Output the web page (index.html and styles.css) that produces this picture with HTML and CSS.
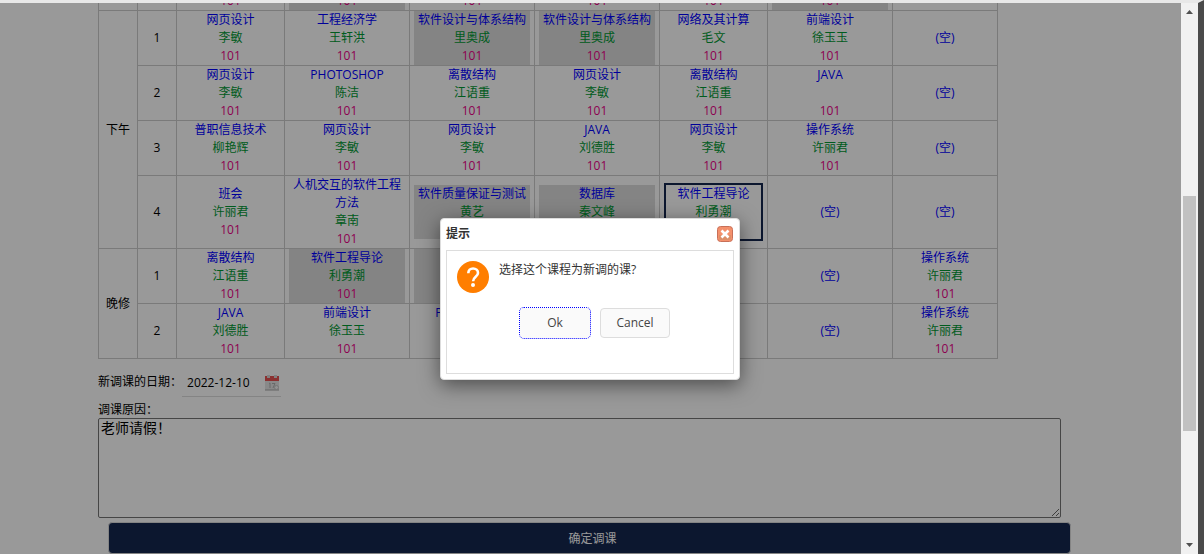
FILE: index.html
```html
<!DOCTYPE html>
<html lang="zh-CN">
<head>
    <meta charset="UTF-8">
    <meta name="viewport" content="width=device-width, initial-scale=1.0">
    <title>调课</title>
    <link rel="stylesheet" href="styles.css">
</head>
<body>
    <div class="window">
        <div class="page">
            <form class="content">
                <table class="timetable">
                    <colgroup>
                        <col class="col-side"><col class="col-side">
                        <col class="col-mid"><col class="col-wide"><col class="col-wide"><col class="col-wide"><col class="col-mid"><col class="col-wide"><col class="col-last">
                    </colgroup>
                    <tbody>
                        <tr>
                            <th></th>
                            <th></th>
                            <td><div class="course"><span class="room">101</span></div></td>
                            <td><div class="course busy"><span class="room">101</span></div></td>
                            <td><div class="course"><span class="room">101</span></div></td>
                            <td><div class="course"><span class="room">101</span></div></td>
                            <td><div class="course"><span class="room">101</span></div></td>
                            <td><div class="course busy"><span class="room">101</span></div></td>
                            <td></td>
                        </tr>
                        <!-- 下午 -->
                        <tr>
                            <th rowspan="4">下午</th>
                            <th>1</th>
                            <td><div class="course"><span class="name">网页设计</span><span class="teacher">李敏</span><span class="room">101</span></div></td>
                            <td><div class="course"><span class="name">工程经济学</span><span class="teacher">王轩洪</span><span class="room">101</span></div></td>
                            <td><div class="course busy"><span class="name">软件设计与体系结构</span><span class="teacher">里奥成</span><span class="room">101</span></div></td>
                            <td><div class="course busy"><span class="name">软件设计与体系结构</span><span class="teacher">里奥成</span><span class="room">101</span></div></td>
                            <td><div class="course"><span class="name">网络及其计算</span><span class="teacher">毛文</span><span class="room">101</span></div></td>
                            <td><div class="course"><span class="name">前端设计</span><span class="teacher">徐玉玉</span><span class="room">101</span></div></td>
                            <td><span class="name">(空)</span></td>
                        </tr>
                        <tr>
                            <th>2</th>
                            <td><div class="course"><span class="name">网页设计</span><span class="teacher">李敏</span><span class="room">101</span></div></td>
                            <td><div class="course"><span class="name">PHOTOSHOP</span><span class="teacher">陈洁</span><span class="room">101</span></div></td>
                            <td><div class="course"><span class="name">离散结构</span><span class="teacher">江语重</span><span class="room">101</span></div></td>
                            <td><div class="course"><span class="name">网页设计</span><span class="teacher">李敏</span><span class="room">101</span></div></td>
                            <td><div class="course"><span class="name">离散结构</span><span class="teacher">江语重</span><span class="room">101</span></div></td>
                            <td><div class="course"><span class="name">JAVA</span><span class="teacher"></span><span class="room">101</span></div></td>
                            <td><span class="name">(空)</span></td>
                        </tr>
                        <tr>
                            <th>3</th>
                            <td><div class="course"><span class="name">普职信息技术</span><span class="teacher">柳艳辉</span><span class="room">101</span></div></td>
                            <td><div class="course"><span class="name">网页设计</span><span class="teacher">李敏</span><span class="room">101</span></div></td>
                            <td><div class="course"><span class="name">网页设计</span><span class="teacher">李敏</span><span class="room">101</span></div></td>
                            <td><div class="course"><span class="name">JAVA</span><span class="teacher">刘德胜</span><span class="room">101</span></div></td>
                            <td><div class="course"><span class="name">网页设计</span><span class="teacher">李敏</span><span class="room">101</span></div></td>
                            <td><div class="course"><span class="name">操作系统</span><span class="teacher">许丽君</span><span class="room">101</span></div></td>
                            <td><span class="name">(空)</span></td>
                        </tr>
                        <tr>
                            <th>4</th>
                            <td><div class="course"><span class="name">班会</span><span class="teacher">许丽君</span><span class="room">101</span></div></td>
                            <td><div class="course"><span class="name">人机交互的软件工程方法</span><span class="teacher">章南</span><span class="room">101</span></div></td>
                            <td><div class="course busy"><span class="name">软件质量保证与测试</span><span class="teacher">黄艺</span><span class="room"></span></div></td>
                            <td><div class="course busy"><span class="name">数据库</span><span class="teacher">秦文峰</span><span class="room"></span></div></td>
                            <td><div class="course selected"><span class="name">软件工程导论</span><span class="teacher">利勇潮</span><span class="room"></span></div></td>
                            <td><span class="name">(空)</span></td>
                            <td><span class="name">(空)</span></td>
                        </tr>
                        <!-- 晚修 -->
                        <tr>
                            <th rowspan="2">晚修</th>
                            <th>1</th>
                            <td><div class="course"><span class="name">离散结构</span><span class="teacher">江语重</span><span class="room">101</span></div></td>
                            <td><div class="course busy"><span class="name">软件工程导论</span><span class="teacher">利勇潮</span><span class="room">101</span></div></td>
                            <td><div class="course busy"><span class="name"></span><span class="teacher"></span><span class="room"></span></div></td>
                            <td></td>
                            <td></td>
                            <td><span class="name">(空)</span></td>
                            <td><div class="course"><span class="name">操作系统</span><span class="teacher">许丽君</span><span class="room">101</span></div></td>
                        </tr>
                        <tr>
                            <th>2</th>
                            <td><div class="course"><span class="name">JAVA</span><span class="teacher">刘德胜</span><span class="room">101</span></div></td>
                            <td><div class="course"><span class="name">前端设计</span><span class="teacher">徐玉玉</span><span class="room">101</span></div></td>
                            <td><div class="course"><span class="name">PHOTOSHOP</span><span class="teacher"></span><span class="room"></span></div></td>
                            <td></td>
                            <td></td>
                            <td><span class="name">(空)</span></td>
                            <td><div class="course"><span class="name">操作系统</span><span class="teacher">许丽君</span><span class="room">101</span></div></td>
                        </tr>
                    </tbody>
                </table>

                <div class="date-row">
                    <label for="newDate">新调课的日期：</label>
                    <span class="date-box">
                        <input type="text" id="newDate" class="date-input" value="2022-12-10">
                        <svg class="date-icon" width="16" height="18" viewBox="0 0 16 18">
                            <rect x="1" y="3" width="14" height="13" fill="#e4e4e4"/>
                            <path d="M1 2h14v5H1z" fill="#e85050"/>
                            <path d="M3 1h3v3H3zM10 1h3v3h-3z" fill="#d8d8d8"/>
                            <path d="M1 16h14" stroke="#a8a8a8"/>
                            <path d="M5 9.500l1-.5v5M8 9.500h3l-2 4.500" fill="none" stroke="#b0b0b0"/>
                            <circle cx="12.500" cy="13.500" r="2" fill="#f4f4f4" stroke="#c4c4c4"/>
                        </svg>
                    </span>
                </div>

                <label class="reason-label" for="reason">调课原因：</label>
                <textarea id="reason" class="reason">老师请假！</textarea>
                <button type="button" class="submit">确定调课</button>
            </form>

            <div class="mask">
                <div class="dialog" role="dialog" aria-labelledby="dialogTitle">
                    <div class="dialog-header">
                        <h2 id="dialogTitle" class="dialog-title">提示</h2>
                        <button type="button" class="dialog-close" aria-label="关闭">
                            <svg width="16" height="16" viewBox="0 0 16 16">
                                <rect x=".5" y=".5" width="15" height="15" rx="3" fill="#f4906c" stroke="#c87058"/>
                                <path d="M2 9h12v3a2 2 0 0 1-2 2H4a2 2 0 0 1-2-2z" fill="#dc8f68"/>
                                <path d="M4.500 4.500l7 7M11.500 4.500l-7 7" stroke="#fff" stroke-width="2.600"/>
                            </svg>
                        </button>
                    </div>
                    <div class="dialog-body">
                        <div class="message">
                            <svg width="32" height="32" viewBox="0 0 32 32">
                                <circle cx="16" cy="16" r="16" fill="#ff7e00"/>
                                <path d="M11.300 12.200C11.300 9.400 13.300 7.500 16.100 7.500s4.900 1.700 4.900 4.400c0 3.700-4.900 4-4.900 8.300" fill="none" stroke="#fff" stroke-width="2.600"/>
                                <circle cx="16" cy="24" r="2" fill="#fff"/>
                            </svg>
                            <p>选择这个课程为新调的课?</p>
                        </div>
                        <div class="dialog-buttons">
                            <button type="button" class="dialog-btn focused">Ok</button>
                            <button type="button" class="dialog-btn">Cancel</button>
                        </div>
                    </div>
                </div>
            </div>
        </div>

        <div class="scrollbar">
            <svg class="scroll-arrow" width="17" height="17" viewBox="0 0 17 17"><path d="M5 11l3.500-4 3.500 4z" fill="#505050"/></svg>
            <div class="track-before"></div>
            <div class="thumb"></div>
            <div class="track-after"></div>
            <svg class="scroll-arrow" width="17" height="17" viewBox="0 0 17 17"><path d="M5 6l3.500 4L12 6z" fill="#505050"/></svg>
        </div>
    </div>
</body>
</html>
```
FILE: styles.css
```css
:root {
    --navy: #14274f;
    --line: #ccc;
}

* {
    margin: 0;
    padding: 0;
    box-sizing: border-box;
}

body {
    font-family: "Open Sans", "Noto Sans CJK SC", sans-serif;
    font-size: 12px;
    line-height: 18px;
    color: #000;
}

button,
input {
    font: inherit;
}

.window {
    display: flex;
    height: 100vh;
    border-top: 3px solid #e8e8e8;
    border-right: 6px solid #4a4a4a;
    overflow: hidden;
}

.page {
    position: relative;
    flex: 1;
    overflow: hidden;
    background: #fff;
}

.content {
    padding: 0 110px 0 98px;
}

/* timetable, scrolled part of the way down */
.timetable {
    width: 900px;
    margin-top: -12px;
    table-layout: fixed;
    border-collapse: collapse;
    text-align: center;
}

.col-side {
    width: 39px;
}

.col-mid {
    width: 108px;
}

.col-wide {
    width: 125px;
}

.col-last {
    width: 105px;
}

.timetable th,
.timetable td {
    padding: 0 4px;
    border: 1px solid var(--line);
    font-weight: normal;
    vertical-align: middle;
}

.course span {
    display: block;
    min-height: 18px;
}

.busy {
    background: #dcdcdc;
}

.selected {
    border: 2px solid var(--navy);
}

.name {
    color: #00f;
}

.teacher {
    color: #093;
}

.room {
    color: #ec0088;
}

/* form under the table */
.date-row {
    display: flex;
    margin-top: 11px;
    line-height: 24px;
}

.date-box {
    display: flex;
    align-items: center;
    width: 99px;
    height: 27px;
    border-bottom: 1px solid #ddd;
}

.date-input {
    flex: 1;
    min-width: 0;
    padding-left: 5px;
    border: none;
    background: none;
    outline: none;
}

.date-icon {
    margin-right: 1px;
}

.reason-label {
    display: block;
    margin-top: 5px;
    line-height: 16px;
}

.reason {
    display: block;
    width: calc(100% - 10px);
    height: 100px;
    padding: 2px;
    border: 1px solid #767676;
    border-radius: 2px;
    font-family: "Liberation Mono", "Noto Sans CJK SC", monospace;
    font-size: 14px;
    line-height: 16px;
}

.submit {
    display: block;
    width: calc(100% - 10px);
    height: 32px;
    margin: 4px 0 0 10px;
    padding: 2px 0 0 6px;
    border: 1px solid #ddd;
    border-radius: 4px;
    background: var(--navy);
    color: #fff;
}

/* message box */
.mask {
    position: absolute;
    inset: 0;
    display: flex;
    justify-content: center;
    align-items: flex-start;
    padding: 215px 1px 0 0;
    background: rgba(0, 0, 0, 0.4);
}

.dialog {
    width: 300px;
    padding: 5px;
    border: 1px solid #ddd;
    border-radius: 4px;
    background: #fff;
    color: #333;
    box-shadow: 0 5px 20px rgba(0, 0, 0, 0.5);
}

.dialog-header {
    display: flex;
    justify-content: space-between;
    align-items: center;
    height: 26px;
    padding: 0 1px 6px 0;
}

.dialog-title {
    font-size: 12px;
    font-weight: bold;
}

.dialog-close {
    width: 16px;
    height: 16px;
    border: none;
    background: none;
}

.dialog-close svg {
    display: block;
}

.dialog-body {
    height: 124px;
    padding: 10px;
    border: 1px solid #ddd;
}

.message {
    display: flex;
    gap: 10px;
}

.dialog-buttons {
    display: flex;
    justify-content: center;
    margin-top: 15px;
}

.dialog-btn {
    width: 70px;
    height: 30px;
    margin-left: 10px;
    border: 1px solid #ddd;
    border-radius: 4px;
    background: #fafafa;
    color: #444;
}

.focused {
    border-color: transparent;
    outline: 1px dotted #00f;
}

/* scrollbar */
.scrollbar {
    display: flex;
    flex-direction: column;
    width: 17px;
    background: #f1f1f1;
}

.scroll-arrow {
    display: block;
}

.track-before {
    flex: 176;
}

.thumb {
    flex: 235;
    margin: 0 2px;
    background: #c1c1c1;
}

.track-after {
    flex: 106;
}
```
